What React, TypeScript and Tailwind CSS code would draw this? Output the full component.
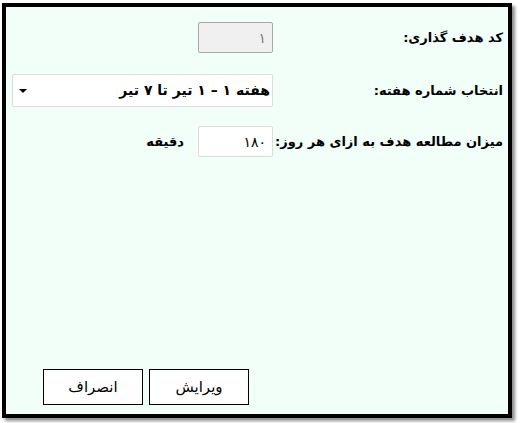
import React from "react";

const font = { fontFamily: '"DejaVu Sans", Tahoma, sans-serif' };

const FieldLabel: React.FC<{ text: string }> = ({ text }) => (
  <div className="w-[235px] shrink-0 pr-[5px] text-[13px] font-bold text-black whitespace-nowrap">
    {text}
  </div>
);

export default function App() {
  return (
    <div className="w-[520px] h-[423px] bg-white pl-[2px] pt-[3px]" style={font}>
      <div className="w-[510px] h-[415px] border-4 border-black bg-[#f2fff8] shadow-[3px_3px_3px_rgba(0,0,0,0.45)] flex flex-col">
        <div dir="rtl" className="flex flex-col pt-[15px]">
          {/* goal code */}
          <div className="flex items-center">
            <FieldLabel text="کد هدف گذاری:" />
            <input
              readOnly
              value="۱"
              className="w-[75px] h-[31px] rounded-[2px] border border-[#a8a8a8] bg-[#f0f0f0] px-[6px] text-[14px] text-[#7a7a7a] outline-none"
            />
          </div>

          {/* week select */}
          <div className="flex items-center mt-[21px]">
            <FieldLabel text="انتخاب شماره هفته:" />
            <div className="relative w-[261px] h-[33px] rounded-[2px] border border-[#dcdcdc] bg-white flex items-center pr-[2px]">
              <span className="text-[14px] font-bold text-black whitespace-nowrap">
                هفته ۱ – ۱ تیر تا ۷ تیر
              </span>
              <span className="absolute left-[6px] top-[14px] w-0 h-0 border-l-[4px] border-r-[4px] border-t-[4px] border-l-transparent border-r-transparent border-t-black" />
            </div>
          </div>

          {/* minutes per day */}
          <div className="flex items-center mt-[19px]">
            <FieldLabel text="میزان مطالعه هدف به ازای هر روز:" />
            <input
              readOnly
              value="۱۸۰"
              className="w-[75px] h-[31px] rounded-[2px] border border-[#dcdcdc] bg-white px-[6px] text-[14px] text-black outline-none"
            />
            <span className="mr-[14px] text-[13px] font-bold text-black">دقیقه</span>
          </div>
        </div>

        <div className="mt-auto mb-[9px] ml-[37px] flex gap-[6px]">
          <button className="w-[100px] h-[36px] border border-black bg-white text-[15px] text-black">
            انصراف
          </button>
          <button className="w-[100px] h-[36px] border border-black bg-white text-[15px] text-black">
            ویرایش
          </button>
        </div>
      </div>
    </div>
  );
}
